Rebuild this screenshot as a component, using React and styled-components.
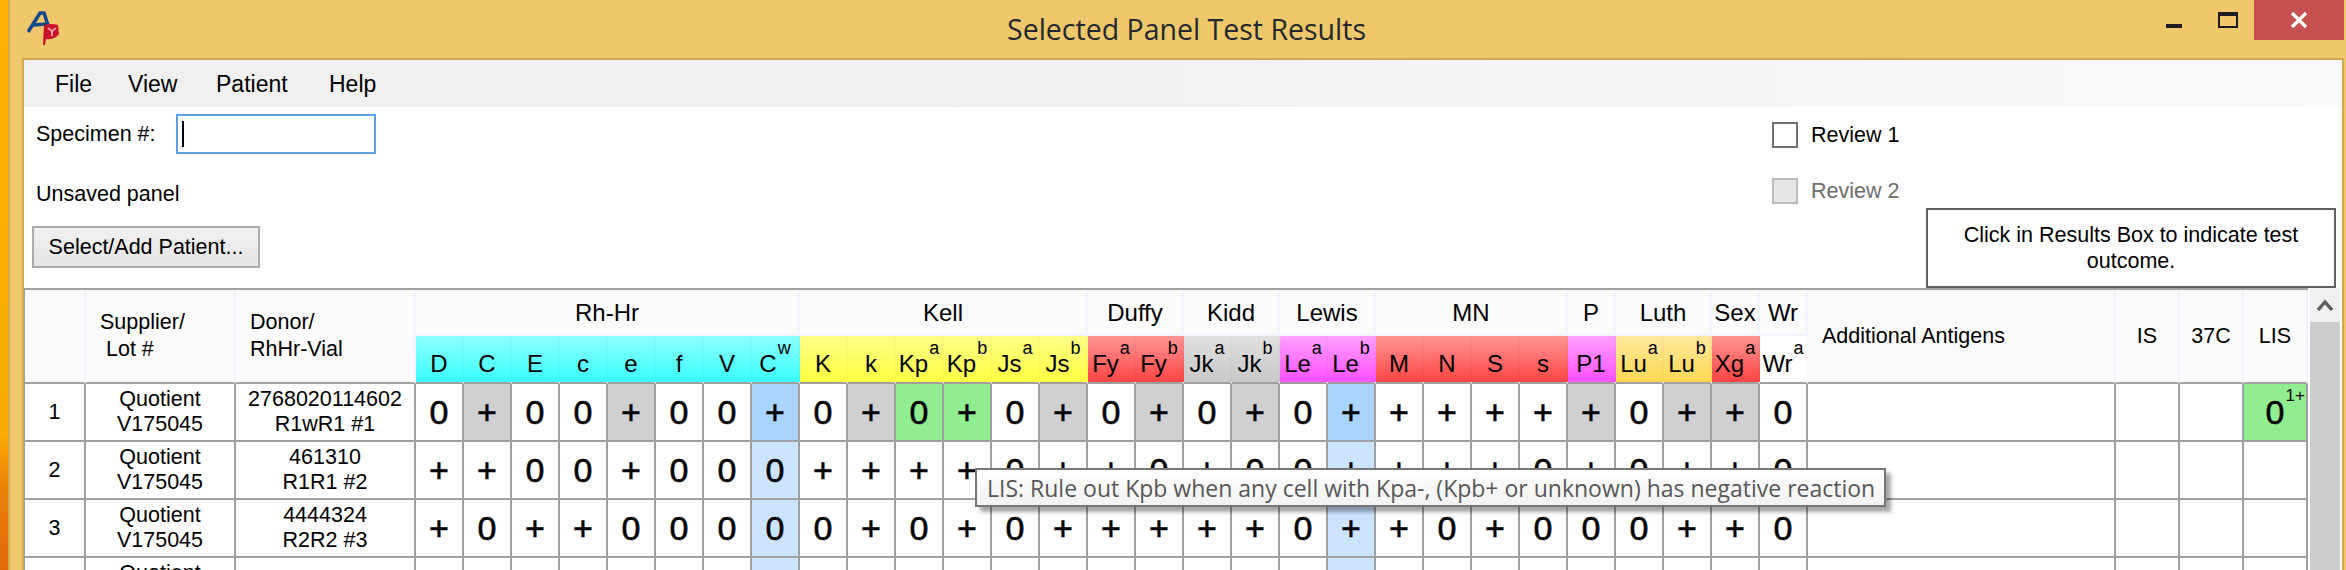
import styled, { createGlobalStyle } from "styled-components";

const GlobalStyle = createGlobalStyle`
    html, body {
        margin: 0;
        padding: 0;
        background: #eec86a;
        overflow: hidden;
    }
    body {
        font-family: "Liberation Sans", Arial, sans-serif;
        font-size: 21.5px;
        color: #000;
    }
`;

const Screen = styled.div`
    display: flex;
    width: 2346px;
    height: 570px;
    overflow: hidden;
`;

const DesktopStrip = styled.div`
    width: 8px;
    flex: none;
    background: linear-gradient(180deg, #ffb200 0%, #fcaa00 76%, #ea8008 86%, #e06a08 100%);
`;

const Window = styled.div`
    flex: 1;
    min-width: 0;
    display: flex;
    flex-direction: column;
    border-left: 2px solid #cfa851;
    background: #eec86a;
`;

const TitleBar = styled.div`
    height: 58px;
    flex: none;
    display: grid;
    grid-template-columns: 1fr auto 1fr;
    padding-left: 17px;
`;

const Logo = styled.svg`
    display: block;
    width: 36px;
    height: 36px;
    margin-top: 10px;
`;

const Title = styled.div`
    font-family: "Open Sans", sans-serif;
    font-size: 28.5px;
    line-height: 58px;
    color: #24282e;
`;

const Controls = styled.div`
    display: flex;
    justify-content: flex-end;
    align-items: flex-start;
    padding-right: 2px;
`;

const MinIcon = styled.div`
    width: 16px;
    height: 4px;
    margin-top: 24px;
    background: #1c1c1c;
`;

const MaxIcon = styled.div`
    width: 20px;
    height: 16px;
    box-sizing: border-box;
    margin: 12px 16px 0 36px;
    border: 2px solid #1c1c1c;
    border-top-width: 4px;
`;

const CloseButton = styled.div`
    width: 90px;
    height: 40px;
    display: flex;
    align-items: center;
    justify-content: center;
    background: #c75050;
    svg {
        display: block;
    }
`;

const Client = styled.div`
    flex: 1;
    min-height: 0;
    display: flex;
    flex-direction: column;
    margin: 0 2px 0 12px;
    border: 2px solid #cfa851;
    border-bottom: none;
    background: #fff;
`;

const MenuBar = styled.div`
    height: 47px;
    flex: none;
    box-sizing: border-box;
    display: grid;
    grid-template-columns: 73px 88px 113px auto;
    justify-content: start;
    align-items: center;
    padding: 1px 0 0 31px;
    background: linear-gradient(90deg, #f0f0f0 0%, #f0f0f0 40%, #fafafa 100%);
    font-size: 23px;
`;

const FormArea = styled.div`
    height: 181px;
    flex: none;
    display: flex;
`;

const FormLeft = styled.div`
    flex: 1;
    display: flex;
    flex-direction: column;
    padding-left: 8px;
`;

const SpecimenRow = styled.div`
    display: flex;
    align-items: center;
    margin-top: 7px;
    padding-left: 4px;
`;

const FieldLabel = styled.span`
    width: 140px;
    padding-top: 1px;
`;

const TextBox = styled.div`
    width: 200px;
    height: 40px;
    box-sizing: border-box;
    display: flex;
    align-items: center;
    padding-left: 4px;
    border: 2px solid #5a9fe0;
    background: #fff;
`;

const Caret = styled.span`
    width: 2px;
    height: 26px;
    background: #000;
`;

const StatusText = styled.div`
    margin-top: 28px;
    padding-left: 4px;
    line-height: 25px;
`;

const PatientButton = styled.button`
    width: 228px;
    height: 42px;
    margin-top: 19px;
    padding: 0;
    box-sizing: border-box;
    border: 2px solid #acacac;
    background: linear-gradient(180deg, #f0f0f0, #e5e5e5);
    font: inherit;
    color: #000;
`;

const ReviewColumn = styled.div`
    width: 154px;
    flex: none;
    display: flex;
    flex-direction: column;
    gap: 30px;
    padding-top: 15px;
`;

const ReviewRow = styled.label`
    display: flex;
    align-items: center;
    gap: 13px;
    height: 26px;
    color: ${p => (p.$disabled ? "#6d6d6d" : "#000")};
`;

const ReviewBox = styled.input`
    appearance: none;
    width: 26px;
    height: 26px;
    margin: 0;
    box-sizing: border-box;
    border: 2px solid ${p => (p.disabled ? "#bcbcbc" : "#707070")};
    background: ${p => (p.disabled ? "#e6e6e6" : "#fff")};
`;

const HintBox = styled.div`
    width: 410px;
    height: 80px;
    flex: none;
    box-sizing: border-box;
    margin: 101px 6px 0 0;
    display: flex;
    align-items: center;
    justify-content: center;
    padding: 0 20px;
    border: 2px solid #606060;
    background: #fff;
    text-align: center;
    line-height: 26px;
    position: relative;
    z-index: 1;
`;

const TableArea = styled.div`
    flex: 1;
    min-height: 0;
    display: flex;
    overflow: hidden;
    position: relative;
`;

const Grid = styled.div`
    display: grid;
    grid-template-columns: 61px 150px 180px repeat(29, 48px) 308px 64px 64px 64px;
    grid-template-rows: 46px 48px repeat(4, 58px);
    align-self: flex-start;
    border-top: 2px solid #a0a0a0;
    border-left: 1px solid #a0a0a0;
`;

const HeadCell = styled.div`
    grid-row: ${p => p.$row || "auto"};
    grid-column: ${p => p.$col || "auto"};
    box-sizing: border-box;
    display: flex;
    align-items: center;
    justify-content: ${p => (p.$left ? "flex-start" : "center")};
    padding-left: ${p => p.$pad || 0}px;
    border-right: 2px solid #eff3fb;
    border-bottom: 2px solid ${p => (p.$group ? "#eff3fb" : "#a0a0a0")};
    background: #fbfbfb;
    white-space: pre;
    line-height: 27px;
    font-size: ${p => (p.$group ? "24px" : "inherit")};
`;

const bands = {
    cyan: ["#8effff", "#38ffff"],
    yellow: ["#ffff88", "#ffff40"],
    red: ["#ff9494", "#ff4444"],
    gray: ["#e0e0e0", "#c8c8c8"],
    pink: ["#ffa0ff", "#ff50ff"],
    gold: ["#ffe8a0", "#ffd850"],
    white: ["#fff", "#fff"],
};

const AntigenCell = styled.div`
    box-sizing: border-box;
    display: flex;
    align-items: flex-end;
    justify-content: center;
    padding-bottom: 4px;
    border-right: 2px solid rgba(0, 0, 0, 0.02);
    border-bottom: 2px solid #a0a0a0;
    background: linear-gradient(180deg, ${p => bands[p.$band][0]}, ${p => bands[p.$band][1]});
    font-size: 24px;
    line-height: 28px;
    white-space: nowrap;
`;

const AntigenSup = styled.sup`
    font-size: 18px;
    line-height: 0;
    vertical-align: 18px;
    margin-left: 1px;
`;

const cellColors = {
    gray: "#d0d0d0",
    blue: "#a8d4ff",
    light: "#cce4ff",
    green: "#90ee90",
};

const Cell = styled.div`
    position: relative;
    box-sizing: border-box;
    display: flex;
    align-items: center;
    justify-content: center;
    border-right: 2px solid #a0a0a0;
    border-bottom: 2px solid #a0a0a0;
    background: ${p => cellColors[p.$fill] || "#fff"};
    text-align: center;
    line-height: 25px;
    white-space: pre;
`;

const Reaction = styled(Cell)`
    font-size: 34px;
    -webkit-text-stroke: 0.6px #000;
`;

const Grade = styled.span`
    position: absolute;
    top: 2px;
    right: 1px;
    font-size: 17px;
    line-height: 20px;
    -webkit-text-stroke: 0;
`;

const ScrollBar = styled.div`
    width: 30px;
    flex: none;
    margin-left: 2px;
    display: flex;
    flex-direction: column;
    background: #cdcdcd;
`;

const ScrollButton = styled.div`
    height: 34px;
    display: flex;
    align-items: center;
    justify-content: center;
    background: #f0f0f0;
`;

const Tooltip = styled.div`
    position: absolute;
    left: 951px;
    top: 180px;
    width: 911px;
    height: 39px;
    box-sizing: border-box;
    display: flex;
    align-items: center;
    padding-left: 10px;
    border: 2px solid #767676;
    background: linear-gradient(180deg, #fff, #f2f2f2);
    box-shadow: 5px 5px 4px rgba(0, 0, 0, 0.35);
    font-family: "Open Sans", sans-serif;
    font-size: 23px;
    color: #575757;
    white-space: nowrap;
`;

const groups = [
    ["Rh-Hr", 8],
    ["Kell", 6],
    ["Duffy", 2],
    ["Kidd", 2],
    ["Lewis", 2],
    ["MN", 4],
    ["P", 1],
    ["Luth", 2],
    ["Sex", 1],
    ["Wr", 1],
];

const antigens = [
    ["D", "", "cyan"], ["C", "", "cyan"], ["E", "", "cyan"], ["c", "", "cyan"],
    ["e", "", "cyan"], ["f", "", "cyan"], ["V", "", "cyan"], ["C", "w", "cyan"],
    ["K", "", "yellow"], ["k", "", "yellow"], ["Kp", "a", "yellow"], ["Kp", "b", "yellow"],
    ["Js", "a", "yellow"], ["Js", "b", "yellow"],
    ["Fy", "a", "red"], ["Fy", "b", "red"],
    ["Jk", "a", "gray"], ["Jk", "b", "gray"],
    ["Le", "a", "pink"], ["Le", "b", "pink"],
    ["M", "", "red"], ["N", "", "red"], ["S", "", "red"], ["s", "", "red"],
    ["P1", "", "pink"],
    ["Lu", "a", "gold"], ["Lu", "b", "gold"],
    ["Xg", "a", "red"],
    ["Wr", "a", "white"],
];

// column index -> fill, the first row has the rule-out colouring
const firstRowFills = {
    1: "gray", 4: "gray", 7: "blue", 9: "gray", 10: "green", 11: "green",
    13: "gray", 15: "gray", 17: "gray", 19: "blue", 24: "gray", 26: "gray", 27: "gray",
};
const otherRowFills = { 7: "light", 19: "light" };

// results are written per blood group system, same order as the groups above
const rows = [
    { id: 1, donor: "2768020114602\nR1wR1 #1", results: "0+00+00+ 0+0+0+ 0+ 0+ 0+ ++++ + 0+ + 0", fills: firstRowFills },
    { id: 2, donor: "461310\nR1R1 #2", results: "++00+000 ++++0+ +0 +0 0+ +++0 + 0+ + 0", fills: otherRowFills },
    { id: 3, donor: "4444324\nR2R2 #3", results: "+0++0000 0+0+0+ ++ ++ 0+ +0+0 0 0+ + 0", fills: otherRowFills },
    { id: 4, donor: "4284327\n", results: "", fills: otherRowFills },
];

const Row = ({ row }) => {
    const results = row.results.replaceAll(" ", "");
    return (
        <>
            <Cell>{row.id}</Cell>
            <Cell>{"Quotient\nV175045"}</Cell>
            <Cell>{row.donor}</Cell>
            {antigens.map((_, i) => (
                <Reaction key={i} $fill={row.fills[i]}>{results[i]}</Reaction>
            ))}
            <Cell />
            <Cell />
            <Cell />
            {row.id === 1 ? (
                <Reaction $fill="green">
                    0<Grade>1+</Grade>
                </Reaction>
            ) : (
                <Cell />
            )}
        </>
    );
};

const App = () => {
    return (
        <Screen>
            <GlobalStyle />
            <DesktopStrip />
            <Window>
                <TitleBar>
                    <Logo viewBox="0 0 36 36">
                        <path d="M1 22 L13 3 L17 3 L21 15 M6 15 L20 14" fill="none" stroke="#104a8c" strokeWidth="3.5" />
                        <path d="M17 15 Q24 13 31 15 L32 24 Q28 30 19 29 L18 35 L16 35 Z" fill="#c8122a" />
                        <path d="M21 18 L25 21 L29 18 M25 21 L25 26" fill="none" stroke="#ef9aa5" strokeWidth="2" />
                    </Logo>
                    <Title>Selected Panel Test Results</Title>
                    <Controls>
                        <MinIcon />
                        <MaxIcon />
                        <CloseButton>
                            <svg width="18" height="16" viewBox="0 0 18 16">
                                <path d="M2 1 L16 15 M16 1 L2 15" stroke="#fff" strokeWidth="3.4" />
                            </svg>
                        </CloseButton>
                    </Controls>
                </TitleBar>
                <Client>
                    <MenuBar>
                        <span>File</span>
                        <span>View</span>
                        <span>Patient</span>
                        <span>Help</span>
                    </MenuBar>
                    <FormArea>
                        <FormLeft>
                            <SpecimenRow>
                                <FieldLabel>Specimen #:</FieldLabel>
                                <TextBox><Caret /></TextBox>
                            </SpecimenRow>
                            <StatusText>Unsaved panel</StatusText>
                            <PatientButton>Select/Add Patient...</PatientButton>
                        </FormLeft>
                        <ReviewColumn>
                            <ReviewRow>
                                <ReviewBox type="checkbox" />
                                Review 1
                            </ReviewRow>
                            <ReviewRow $disabled>
                                <ReviewBox type="checkbox" disabled />
                                Review 2
                            </ReviewRow>
                        </ReviewColumn>
                        <HintBox>Click in Results Box to indicate test outcome.</HintBox>
                    </FormArea>
                    <TableArea>
                        <Grid>
                            <HeadCell $row="1 / span 2" $col="1" />
                            <HeadCell $row="1 / span 2" $col="2" $left $pad={14}>{"Supplier/\n Lot #"}</HeadCell>
                            <HeadCell $row="1 / span 2" $col="3" $left $pad={14}>{"Donor/\nRhHr-Vial"}</HeadCell>
                            {groups.map(([name, span]) => (
                                <HeadCell key={name} $group $col={`span ${span}`}>{name}</HeadCell>
                            ))}
                            <HeadCell $row="1 / span 2" $col="33" $left $pad={14}>Additional Antigens</HeadCell>
                            <HeadCell $row="1 / span 2" $col="34">IS</HeadCell>
                            <HeadCell $row="1 / span 2" $col="35">37C</HeadCell>
                            <HeadCell $row="1 / span 2" $col="36">LIS</HeadCell>
                            {antigens.map(([name, sup, band], i) => (
                                <AntigenCell key={i} $band={band} style={{ gridRow: 2, gridColumn: i + 4 }}>
                                    <span>
                                        {name}
                                        {sup && <AntigenSup>{sup}</AntigenSup>}
                                    </span>
                                </AntigenCell>
                            ))}
                            {rows.map(row => (
                                <Row key={row.id} row={row} />
                            ))}
                        </Grid>
                        <ScrollBar>
                            <ScrollButton>
                                <svg width="16" height="12" viewBox="0 0 16 12">
                                    <path d="M1 11 L8 3 L15 11" fill="none" stroke="#606060" strokeWidth="3.4" />
                                </svg>
                            </ScrollButton>
                        </ScrollBar>
                        <Tooltip>LIS: Rule out Kpb when any cell with Kpa-, (Kpb+ or unknown) has negative reaction</Tooltip>
                    </TableArea>
                </Client>
            </Window>
        </Screen>
    );
};

export default App;
